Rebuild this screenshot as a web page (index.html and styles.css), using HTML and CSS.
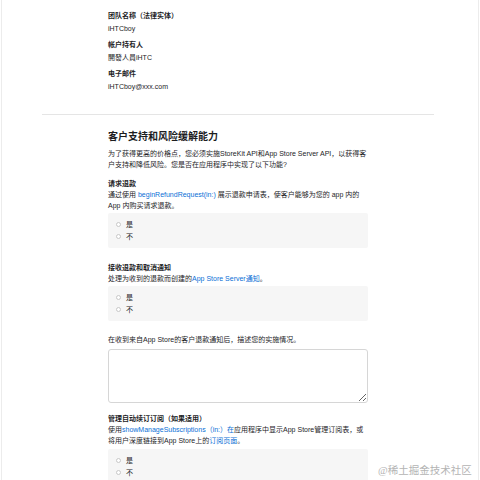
FILE: index.html
```html
<!DOCTYPE html>
<html lang="zh-CN">
<head>
    <meta charset="UTF-8">
    <meta name="viewport" content="width=device-width, initial-scale=1.0">
    <title>App 信息</title>
    <link rel="stylesheet" href="styles.css">
</head>

<body>
<div class="page">
    <div class="wrap info">
        <dl>
            <dt>团队名称（法律实体）</dt>
            <dd>iHTCboy</dd>
        </dl>
        <dl>
            <dt>帐户持有人</dt>
            <dd>開發人員iHTC</dd>
        </dl>
        <dl>
            <dt>电子邮件</dt>
            <dd>iHTCboy@xxx.com</dd>
        </dl>
    </div>

    <hr class="split">

    <div class="wrap">
        <h2>客户支持和风险缓解能力</h2>
        <p class="intro">为了获得更高的价格点，您必须实施StoreKit API和App Store Server API，以获得客户支持和降低风险。您是否在应用程序中实现了以下功能?</p>

        <div class="question">
            <h3>请求退款</h3>
            <p><span>通过使用 </span><a href="#">beginRefundRequest(in:)</a><span> 展示退款申请表，使客户能够为您的 app 内的</span><br><span>App 内购买请求退款。</span></p>
            <div class="choice">
                <label><input type="radio" name="q1"> 是</label>
                <label><input type="radio" name="q1"> 不</label>
            </div>
        </div>

        <div class="question">
            <h3>接收退款和取消通知</h3>
            <p><span>处理为收到的退款而创建的</span><a href="#">App Store Server通知</a><span>。</span></p>
            <div class="choice">
                <label><input type="radio" name="q2"> 是</label>
                <label><input type="radio" name="q2"> 不</label>
            </div>
        </div>

        <div class="question note">
            <p>在收到来自App Store的客户退款通知后，描述您的实施情况。</p>
            <textarea class="desc"></textarea>
        </div>

        <div class="question after-note">
            <h3>管理自动续订订阅（如果适用）</h3>
            <p><span>使用</span><a href="#">showManageSubscriptions（in:）在</a><span>应用程序中显示App Store管理订阅表，或</span><br><span>将用户深度链接到App Store上的</span><a href="#">订阅页面</a><span>。</span></p>
            <div class="choice">
                <label><input type="radio" name="q3"> 是</label>
                <label><input type="radio" name="q3"> 不</label>
            </div>
        </div>
    </div>
</div>
<div class="mark">@稀土掘金技术社区</div>
</body>
</html>
```

FILE: styles.css
```css
body {
    margin: 0;
    font-family: "Liberation Sans", "Noto Sans CJK SC", sans-serif;
    font-size: 7px;
    line-height: 11px;
    color: #1d1d1f;
    background-color: #fff;
}

.page {
    margin: 0 1px;
    min-height: 480px;
    border-left: 1px solid #ececec;
    border-right: 1px solid #ececec;
    padding-top: 9px;
}

.wrap {
    width: 262px;
    margin-left: 106px;
}

/* 账号信息 */
.info dl {
    margin: 0 0 3px;
}
.info dt {
    font-weight: bold;
    line-height: 13px;
}
.info dd {
    margin: 0;
    line-height: 13px;
}

.split {
    width: 392px;
    height: 0;
    margin: 21px 0 15px 40px;
    border: 0;
    border-top: 1px solid #e5e5e5;
}

h2 {
    margin: 0;
    font-size: 10px;
    line-height: 14px;
    font-weight: bold;
}

.intro {
    margin: 3.5px 0 0;
}

p {
    margin: 0;
}

a {
    color: #0a6fd6;
    text-decoration: none;
}

.question {
    margin-top: 8px;
}
.question + .question {
    margin-top: 13.5px;
}
.question.note {
    margin-top: 12.5px;
}
.question.after-note {
    margin-top: 9.5px;
}

h3 {
    margin: 0;
    font-size: 7px;
    font-weight: bold;
}

.choice {
    width: 260px;
    box-sizing: border-box;
    margin-top: 2.5px;
    padding: 5px 8px;
    background-color: #f6f6f6;
    border-radius: 2px;
}
.after-note .choice {
    margin-top: 3.5px;
}

.choice label {
    display: flex;
    align-items: center;
    gap: 5px;
    height: 12.5px;
}

.choice input {
    appearance: none;
    width: 5px;
    height: 5px;
    margin: 0;
    border: 1px solid #c8c8c8;
    border-radius: 50%;
    background-color: #fff;
}

.desc {
    display: block;
    width: 260px;
    height: 54px;
    box-sizing: border-box;
    margin-top: 4.5px;
    border: 1px solid #d6d6d6;
    border-radius: 3px;
    background-color: #fff;
}

.mark {
    position: absolute;
    left: 378px;
    top: 463px;
    font-family: "Liberation Serif", "Noto Sans CJK SC", serif;
    font-size: 10.5px;
    line-height: 16px;
    color: #b4b4b4;
}
```
